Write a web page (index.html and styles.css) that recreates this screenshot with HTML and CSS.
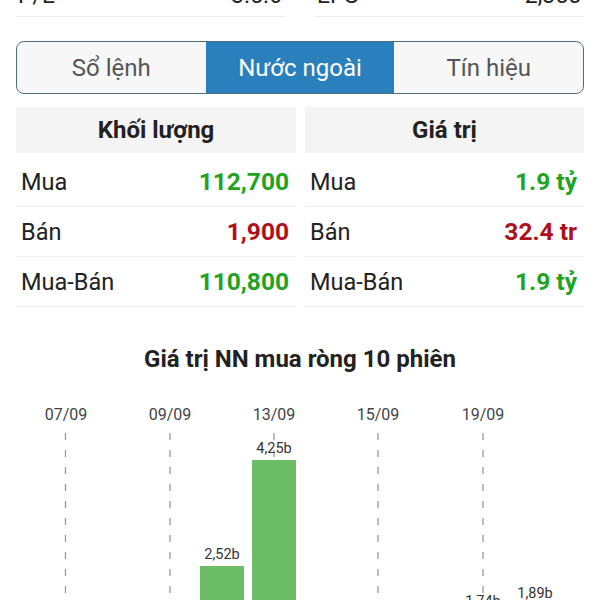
FILE: index.html
```html
<!DOCTYPE html>
<html lang="vi">
<head>
  <meta charset="UTF-8" />
  <title>Nước ngoài</title>
  <meta name="viewport" content="width=device-width, initial-scale=1.0" />
  <link rel="stylesheet" href="styles.css">
</head>
<body>

  <div class="page">
    <div class="prev-table">
      <div class="info-row"><span>P/E</span><span>3.5.6</span></div>
      <div class="info-row"><span>EPS</span><span>2,355</span></div>
    </div>

    <div class="tabs">
      <div class="tab">Sổ lệnh</div>
      <div class="tab active">Nước ngoài</div>
      <div class="tab">Tín hiệu</div>
    </div>

    <div class="foreign-tables">
      <div class="stat-table">
        <div class="stat-head">Khối lượng</div>
        <div class="stat-row"><span>Mua</span><span class="up">112,700</span></div>
        <div class="stat-row"><span>Bán</span><span class="down">1,900</span></div>
        <div class="stat-row"><span>Mua-Bán</span><span class="up">110,800</span></div>
      </div>
      <div class="stat-table">
        <div class="stat-head">Giá trị</div>
        <div class="stat-row"><span>Mua</span><span class="up">1.9 tỷ</span></div>
        <div class="stat-row"><span>Bán</span><span class="down">32.4 tr</span></div>
        <div class="stat-row"><span>Mua-Bán</span><span class="up">1.9 tỷ</span></div>
      </div>
    </div>

    <h2 class="chart-title">Giá trị NN mua ròng 10 phiên</h2>

    <div class="chart">
      <svg width="600" height="230" viewBox="0 0 600 230">
        <g class="dates">
          <text x="66" y="29">07/09</text>
          <text x="170" y="29">09/09</text>
          <text x="274" y="29">13/09</text>
          <text x="378" y="29">15/09</text>
          <text x="483" y="29">19/09</text>
        </g>
        <g class="grid">
          <line x1="65.5" y1="42" x2="65.5" y2="230" />
          <line x1="170" y1="42" x2="170" y2="230" />
          <line x1="274" y1="42" x2="274" y2="230" />
          <line x1="378" y1="42" x2="378" y2="230" />
          <line x1="483" y1="42" x2="483" y2="230" />
        </g>
        <g class="bars">
          <rect x="200" y="175" width="44" height="60" />
          <rect x="252" y="69" width="44" height="170" />
          <rect x="461" y="222" width="44" height="20" />
          <rect x="513" y="213" width="44" height="20" />
        </g>
        <g class="values">
          <text x="222" y="168">2,52b</text>
          <text x="274" y="62">4,25b</text>
          <text x="483" y="215">1,74b</text>
          <text x="535" y="207">1,89b</text>
        </g>
      </svg>
    </div>
  </div>

</body>
</html>
```

FILE: styles.css
```css
* {
  box-sizing: border-box;
  margin: 0;
  padding: 0;
}

html, body {
  height: 600px;
  overflow: hidden;
  background: #ffffff;
  font-family: Roboto, 'Noto Sans', sans-serif;
  color: #222;
}

.page {
  width: 600px;
}

.prev-table {
  display: grid;
  grid-template-columns: 1fr 1fr;
  column-gap: 30px;
  padding: 0 16px;
  margin-top: -26px;
}

.info-row {
  display: flex;
  justify-content: space-between;
  align-items: center;
  height: 43px;
  padding: 0 3px 0 2px;
  border-bottom: 1px solid #ececec;
  font-size: 23px;
}

.tabs {
  display: flex;
  margin: 24px 16px 0;
  height: 53px;
  border: 1.5px solid #4f6d7d;
  border-radius: 8px;
  overflow: hidden;
  background: #f7f7f7;
}

.tab {
  flex: 1;
  display: flex;
  align-items: center;
  justify-content: center;
  font-size: 24px;
  color: #555;
}

.tab.active {
  background: #2a7fbd;
  color: #ffffff;
}

.foreign-tables {
  display: grid;
  grid-template-columns: 280px 279px;
  column-gap: 9px;
  padding: 0 16px;
  margin-top: 13px;
}

.stat-head {
  height: 46px;
  margin-bottom: 4px;
  display: flex;
  align-items: center;
  justify-content: center;
  background: #f4f4f4;
  font-size: 24px;
  font-weight: bold;
  color: #222;
}

.stat-row {
  display: flex;
  justify-content: space-between;
  align-items: center;
  height: 50px;
  padding: 0 7px 0 5px;
  border-bottom: 1px solid #ededed;
  font-size: 23.5px;
  color: #222;
}

.stat-row:first-of-type {
  height: 53px;
}

.stat-row .up,
.stat-row .down {
  font-weight: bold;
  font-size: 24.5px;
}

.up {
  color: #1ea323;
}

.down {
  color: #b0101a;
}

.chart-title {
  margin-top: 38px;
  text-align: center;
  font-size: 24px;
  font-weight: bold;
  color: #222;
}

.chart {
  margin-top: 18px;
}

.chart svg {
  display: block;
  font-family: Roboto, sans-serif;
}

.dates text {
  font-size: 16px;
  fill: #444;
  text-anchor: middle;
}

.grid line {
  stroke: #999;
  stroke-width: 1.3;
  stroke-dasharray: 7 10;
}

.bars rect {
  fill: #6dbd67;
}

.values text {
  font-size: 14.5px;
  fill: #333;
  text-anchor: middle;
}
```
